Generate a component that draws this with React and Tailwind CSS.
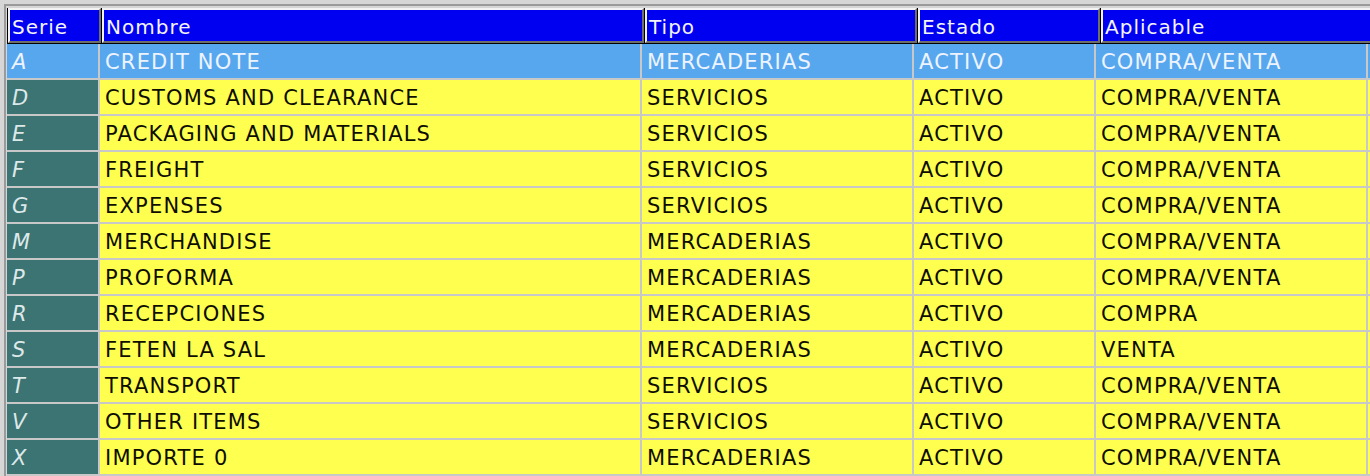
const rows = [
  ["A", "CREDIT NOTE", "MERCADERIAS", "ACTIVO", "COMPRA/VENTA"],
  ["D", "CUSTOMS AND CLEARANCE", "SERVICIOS", "ACTIVO", "COMPRA/VENTA"],
  ["E", "PACKAGING AND MATERIALS", "SERVICIOS", "ACTIVO", "COMPRA/VENTA"],
  ["F", "FREIGHT", "SERVICIOS", "ACTIVO", "COMPRA/VENTA"],
  ["G", "EXPENSES", "SERVICIOS", "ACTIVO", "COMPRA/VENTA"],
  ["M", "MERCHANDISE", "MERCADERIAS", "ACTIVO", "COMPRA/VENTA"],
  ["P", "PROFORMA", "MERCADERIAS", "ACTIVO", "COMPRA/VENTA"],
  ["R", "RECEPCIONES", "MERCADERIAS", "ACTIVO", "COMPRA"],
  ["S", "FETEN LA SAL", "MERCADERIAS", "ACTIVO", "VENTA"],
  ["T", "TRANSPORT", "SERVICIOS", "ACTIVO", "COMPRA/VENTA"],
  ["V", "OTHER ITEMS", "SERVICIOS", "ACTIVO", "COMPRA/VENTA"],
  ["X", "IMPORTE 0", "MERCADERIAS", "ACTIVO", "COMPRA/VENTA"],
];

const widths = ["w-[93px]", "w-[542px]", "w-[272px]", "w-[182px]", "w-[272px]"];
const headers = ["Serie", "Nombre", "Tipo", "Estado", "Aplicable"];

export default function App() {
  return (
    <div
      className="w-[1370px] h-[476px] overflow-hidden bg-[#d6d6d6] relative"
      style={{ fontFamily: '"DejaVu Sans", Verdana, sans-serif' }}
    >
      <div className="absolute left-[4px] top-[4px] right-0 bottom-0 border-l-2 border-t-2 border-[#9a9a9a]" />
      <div className="relative pt-[8px] pl-[7px] flex flex-col">
        <div className="flex h-[36px] bg-black">
          {headers.map((h, i) => (
            <div
              key={h}
              className={`${widths[i]} shrink-0 h-[35px] mr-[1px] first:ml-[1px] bg-[#0000f0] border-t-2 border-l-2 border-t-[#f2f2f2] border-l-[#f2f2f2] border-b-2 border-r-2 border-b-[#6e6e6e] border-r-[#6e6e6e] flex items-center pl-[2px] pt-[2px] text-[20px] tracking-[1px] text-[#f4f4ff]`}
            >
              {h}
            </div>
          ))}
          <div className="flex-1 h-[35px] bg-[#0000f0] border-t-2 border-l-2 border-[#f2f2f2]" />
        </div>
        {rows.map((r, ri) => {
          const sel = ri === 0;
          return (
            <div key={r[0]} className="flex h-[36px]">
              {r.map((c, ci) => (
                <div
                  key={ci}
                  className={`${widths[ci]} shrink-0 h-[36px] border-r-2 border-b-2 border-[#c8c8c8] flex items-center pt-[4px] text-[21px] ${
                    ci === 0 ? "pl-[5px] italic tracking-[0px]" : "pl-[5px] tracking-[1.2px]"
                  } ${
                    sel
                      ? "bg-[#57a7ef] text-[#eef4ff]"
                      : ci === 0
                      ? "bg-[#3c7373] text-[#dde9e9]"
                      : "bg-[#ffff50] text-[#0e0e00]"
                  }`}
                >
                  {c}
                </div>
              ))}
              <div
                className={`flex-1 h-[36px] border-b-2 border-[#c8c8c8] ${
                  sel ? "bg-[#57a7ef]" : "bg-[#ffff50]"
                }`}
              />
            </div>
          );
        })}
      </div>
    </div>
  );
}
